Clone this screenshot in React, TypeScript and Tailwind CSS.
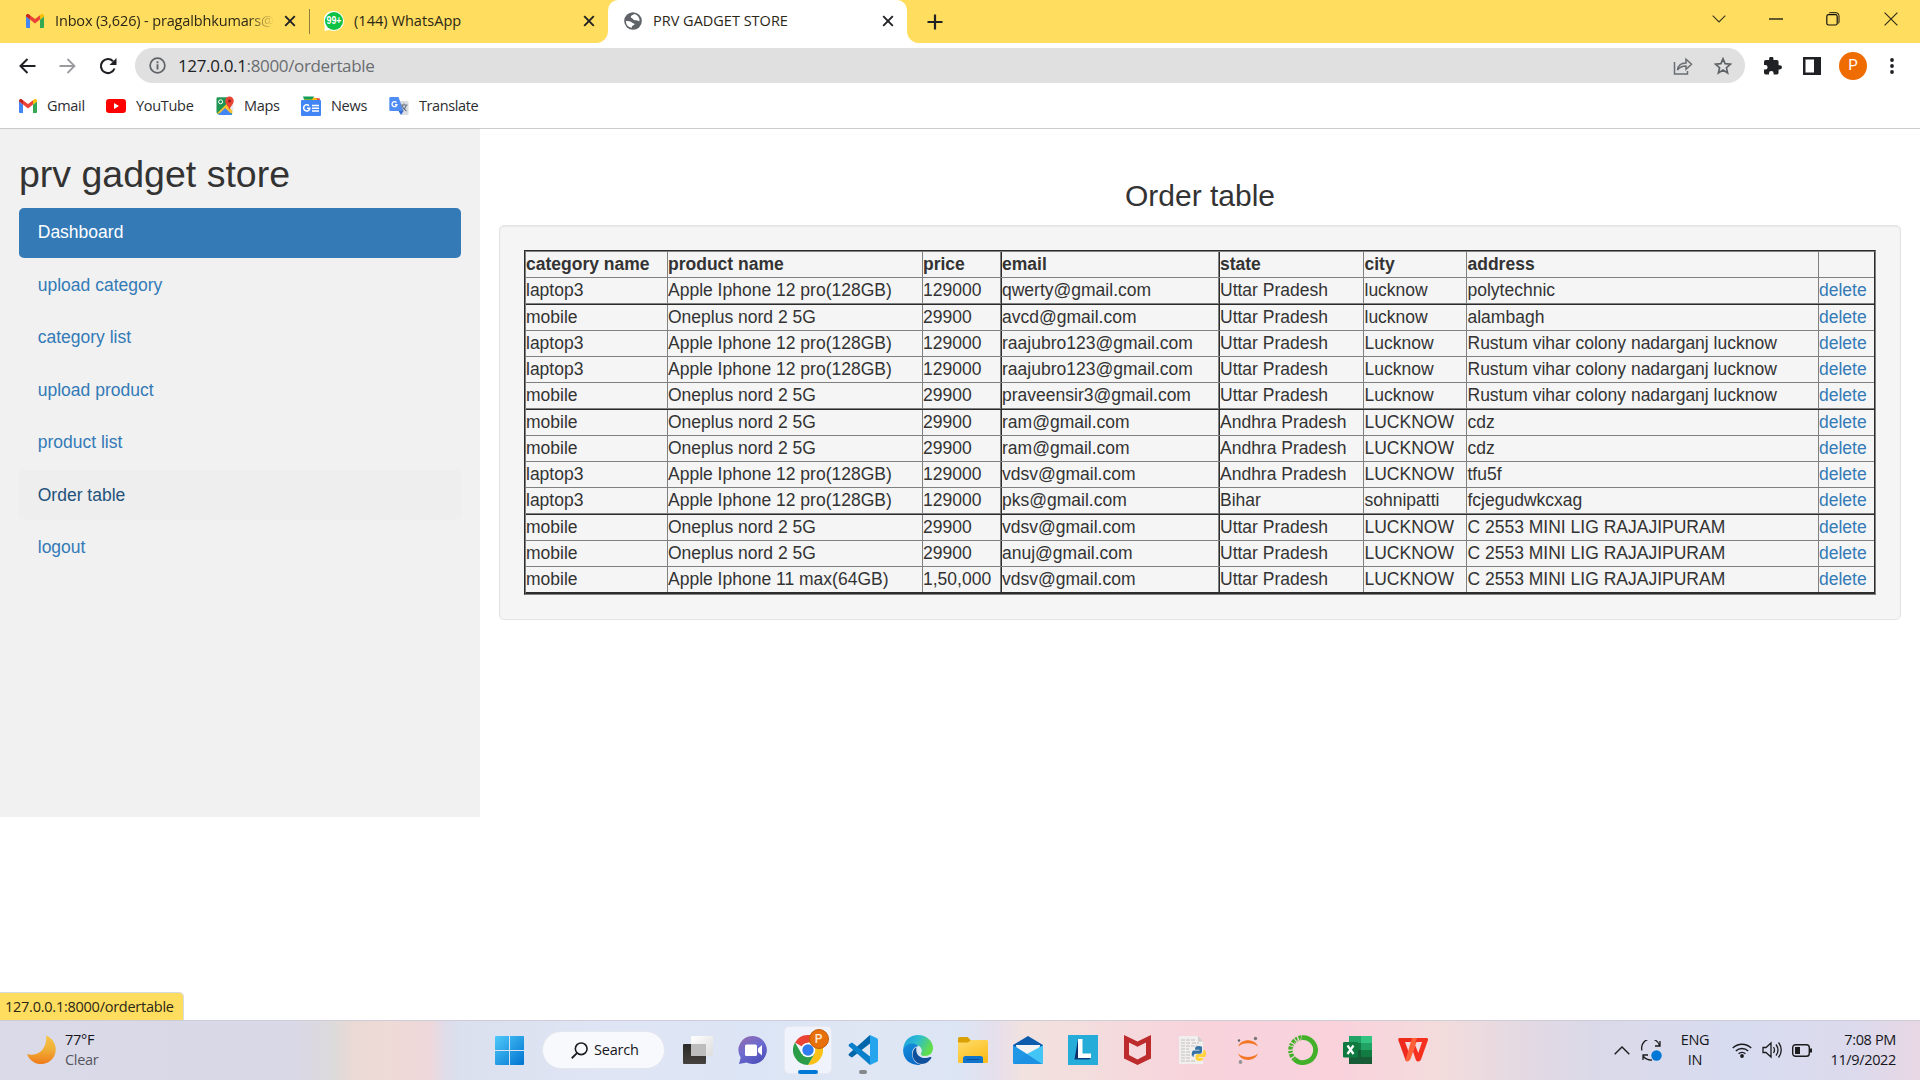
import React from "react";

const UI = "font-['Open_Sans','Noto_Sans',sans-serif]";

/* ---------- brand icons ---------- */

const Gmail = ({ className = "" }: { className?: string }) => (
  <svg viewBox="0 0 18 14" className={className}>
    <path d="M0 1.800V13a1 1 0 0 0 1 1h3V5.500L0 2.400z" fill="#4285f4" />
    <path d="M14 5.500V14h3a1 1 0 0 0 1-1V2.400z" fill="#34a853" />
    <path d="M14 1.200v4.400l4-3V1.700C18 .2 16.200-.5 15 .4z" fill="#fbbc04" />
    <path d="M4 1.200 9 5l5-3.800v4.400L9 9.400 4 5.600z" fill="#ea4335" />
    <path d="M0 1.700v.9l4 3V1.200L3 .4C1.800-.5 0 .2 0 1.700z" fill="#c5221f" />
  </svg>
);

const YouTube = () => (
  <svg viewBox="0 0 20 14" className="h-[14px] w-5">
    <rect width="20" height="14" rx="3.200" fill="#f00" />
    <path d="M8 4v6l5-3z" fill="#fff" />
  </svg>
);

const Maps = () => (
  <svg viewBox="0 0 20 20" className="h-5 w-5">
    <path d="M2 1.500h10l5 8V18H2z" fill="#34a853" />
    <path d="M1.500 2v15L13 7l1-5.500H3Q1.500 1.500 1.500 2z" fill="#1e9553" />
    <path d="m2 17.500 11-11L17.500 12v5z" fill="#fbc02d" />
    <path d="m3 19 7-7 7.500 7z" fill="#4285f4" />
    <path d="m12 8 6.500 8.500V9z" fill="#e8eaed" />
    <circle cx="5.600" cy="5.800" r="2" fill="none" stroke="#fff" strokeWidth="1" />
    <path d="M14.500 .5A4.200 4.200 0 0 0 10.300 4.800C10.300 8.500 13.500 10 14.500 14c1-4 4.200-5.500 4.200-9.200A4.200 4.200 0 0 0 14.500 .5z" fill="#ea4335" />
    <circle cx="14.500" cy="5" r="1.500" fill="#8c1d18" />
  </svg>
);

const News = () => (
  <svg viewBox="0 0 20 20" className="h-5 w-5">
    <path d="m8 1 11 1.500-1 5H6z" fill="#ea4335" />
    <path d="M4 2h11.500l1 4H3z" fill="#fbbc04" />
    <path d="M2 .5h11l-2 3H3z" fill="#0f9d58" />
    <rect y="4" width="20" height="16" rx="1" fill="#4285f4" />
    <path d="M8 9.800A3.100 3.100 0 1 0 8.800 12.300H6" fill="none" stroke="#fff" strokeWidth="1.600" />
    <path d="M11 9.500h7M11 12.200h7M11 15h7" stroke="#fff" strokeWidth="1.500" />
  </svg>
);

const Translate = () => (
  <svg viewBox="0 0 20 20" className="h-5 w-5">
    <path d="M8 5h10a1.500 1.500 0 0 1 1.500 1.500v11A1.500 1.500 0 0 1 18 19h-5.500z" fill="#d9dce1" />
    <path d="M1.500 1h8l5 14h-13A1.200 1.200 0 0 1 .3 13.800V2.200A1.200 1.200 0 0 1 1.500 1z" fill="#4f8df5" />
    <path d="M9.500 15h5l-2.500 4z" fill="#3367d6" />
    <path d="M7.500 6.600A2.500 2.500 0 1 0 8 8.600H6" fill="none" stroke="#fff" strokeWidth="1.300" />
    <path d="M11.500 9h7M15 7.500V9M13 9.500c.8 2.500 2 4 4.500 5.500M17.200 9.500c-.7 2.500-2 4-4.200 5.500" fill="none" stroke="#6b7785" strokeWidth="1.100" />
  </svg>
);

const WhatsApp = () => (
  <svg viewBox="0 0 20 20" className="h-5 w-5">
    <path d="M10 0a10 10 0 0 1 0 20 10 10 0 0 1-4.500-1L.5 20l.3-5A10 10 0 0 1 10 0z" fill="#fff" />
    <circle cx="10" cy="10" r="9" fill="#0cc143" />
    <text x="10" y="13.400" fontSize="10" fontWeight="700" textAnchor="middle" fill="#fff" fontFamily="Liberation Sans" textLength="15" lengthAdjust="spacingAndGlyphs">99+</text>
  </svg>
);

const Globe = () => (
  <svg viewBox="0 0 18 18" className="h-[18px] w-[18px]">
    <circle cx="9" cy="9" r="8.800" fill="#5f6368" />
    <path d="M10.500 2c-2 1-3.500 1.200-3.800 3 .2 1.500 1.800.8 2.300 2 .2 1.300 2 1 3.200 1.300 1.500.2 2.300.5 3.300 1.200a7 7 0 0 0-5-7.500zM1.900 9c2 .2 4.500-.2 5.600 1.300.8 1 2.500.8 3 1.700.3 1.500-2 1.300-2.500 2.300-.2.800 0 1.200-.5 1.500A7 7 0 0 1 1.900 9z" fill="#fff" />
  </svg>
);

const TabClose = () => (
  <svg viewBox="0 0 12 12" className="h-3 w-3">
    <path d="m1.200 1.200 9.600 9.600m0-9.600-9.600 9.600" stroke="#202124" strokeWidth="1.900" />
  </svg>
);

/* ---------- browser chrome ---------- */

const TabStrip = () => (
  <div className={`flex h-[43px] bg-[#ffdd5e] text-[14.500px] text-[#2b2717] ${UI}`}>
    <div className="flex h-[42px] w-[309px] items-center pl-[26px]">
      <Gmail className="h-[14px] w-[18px]" />
      <span className="ml-[11px] w-[219px] overflow-hidden whitespace-nowrap tracking-[-0.150px] [mask-image:linear-gradient(90deg,#000_88%,transparent)]">
        Inbox (3,626) - pragalbhkumars@
      </span>
      <span className="ml-[10px]"><TabClose /></span>
    </div>
    <div className="mt-[9px] h-[25px] w-px bg-[#8f7e3c]" />
    <div className="w-[298px] bg-white">
      <div className="flex h-[43px] items-center rounded-br-[12px] bg-[#ffdd5e] pb-px pl-[14px]">
        <WhatsApp />
        <span className="ml-[10px] w-[229px] tracking-[0.050px]">(144) WhatsApp</span>
        <TabClose />
      </div>
    </div>
    <div className="bg-[#ffdd5e]">
      <div className="flex h-[43px] w-[299px] items-center rounded-t-[10px] bg-white pb-px pl-[16px]">
        <Globe />
        <span className="ml-[11px] w-[229px] tracking-[0px]">PRV GADGET STORE</span>
        <TabClose />
      </div>
    </div>
    <div className="flex flex-1 bg-white">
      <div className="flex flex-1 items-center rounded-bl-[12px] bg-[#ffdd5e] pl-[20px]">
        <svg viewBox="0 0 16 16" className="h-4 w-4">
          <path d="M8 .5v15M.5 8h15" stroke="#202124" strokeWidth="2.200" />
        </svg>
        <div className="mb-[6px] ml-auto flex items-center pr-[22px]">
          <svg viewBox="0 0 14 8" className="mr-[43px] h-2 w-[14px]"><path d="m.7.7 6.300 6.300L13.300.7" fill="none" stroke="#3a3420" strokeWidth="1.100" /></svg>
          <svg viewBox="0 0 14 2" className="mr-[43px] h-[2px] w-[14px]"><path d="M0 1h14" stroke="#111" strokeWidth="1.300" /></svg>
          <svg viewBox="0 0 14 14" className="mr-[44px] h-[14px] w-[14px]">
            <rect x=".8" y="2.600" width="10.400" height="10.400" rx="1.800" fill="none" stroke="#111" strokeWidth="1.200" />
            <path d="M3 1.200q.5-.5 1.300-.5h5.700a3 3 0 0 1 3 3V10q0 1-.6 1.500" fill="none" stroke="#111" strokeWidth="1" />
          </svg>
          <svg viewBox="0 0 14 14" className="h-[14px] w-[14px]"><path d="m.6.600 12.800 12.800m0-12.800L.6 13.400" stroke="#2a2618" strokeWidth="1.100" /></svg>
        </div>
      </div>
    </div>
  </div>
);

const Toolbar = () => (
  <div className={`flex h-[45px] items-center bg-white pl-[19px] ${UI}`}>
    <svg viewBox="0 0 17 16" className="h-4 w-[17px]"><path d="M16.500 8H2M8.500 1 1.500 8l7 7" fill="none" stroke="#202124" strokeWidth="2" /></svg>
    <svg viewBox="0 0 17 16" className="ml-[23px] h-4 w-[17px]"><path d="M.5 8H15M8.500 1l7 7-7 7" fill="none" stroke="#9a9ca0" strokeWidth="1.800" /></svg>
    <svg viewBox="0 0 18 18" className="ml-[23px] h-[18px] w-[18px]">
      <path d="M15.500 11.500A7 7 0 1 1 14 4.200" fill="none" stroke="#202124" strokeWidth="2.100" />
      <path d="M17.500 1v7h-7z" fill="#202124" />
    </svg>
    <div className="ml-[18px] flex h-[35px] w-[1610px] items-center rounded-full bg-[#e0e0e0] pl-[14px] pr-[13px]">
      <svg viewBox="0 0 18 18" className="h-[17px] w-[17px]">
        <circle cx="9" cy="9" r="7.800" fill="none" stroke="#5f6368" strokeWidth="1.800" />
        <path d="M9 7.800v5.400M9 4.600v2" stroke="#5f6368" strokeWidth="2" />
      </svg>
      <span className="ml-[12px] text-[17px] tracking-[-0.350px] text-[#202124]">
        127.0.0.1<span className="text-[#6a6d71]">:8000/ordertable</span>
      </span>
      <svg viewBox="0 0 20 18" className="ml-auto h-[18px] w-5">
        <path d="M1.500 5v12h13v-3M4.500 13c.5-4 3.500-7 8.500-7V2.200l5.500 5-5.500 5V9c-4 0-6.500 1.200-8.500 4z" fill="none" stroke="#6a6d71" strokeWidth="1.500" />
      </svg>
      <svg viewBox="0 0 18 18" className="ml-[21px] h-[18px] w-[18px]">
        <path d="m9 1.800 2.100 4.900 5.300.500-4 3.500 1.200 5.200L9 13.100l-4.600 2.800 1.200-5.200-4-3.500 5.300-.5z" fill="none" stroke="#5f6368" strokeWidth="1.700" />
      </svg>
    </div>
    <svg viewBox="2 1.500 21 21" className="ml-[19px] h-[18px] w-[18px]">
      <path d="M20.500 11H19V7a2 2 0 0 0-2-2h-4V3.500a2.500 2.500 0 0 0-5 0V5H4a2 2 0 0 0-2 2v3.800h1.500a2.700 2.700 0 0 1 0 5.400H2V20a2 2 0 0 0 2 2h3.800v-1.500a2.700 2.700 0 0 1 5.400 0V22H17a2 2 0 0 0 2-2v-4h1.500a2.500 2.500 0 0 0 0-5z" fill="#202124" />
    </svg>
    <svg viewBox="0 0 18 18" className="ml-[21px] h-[18px] w-[18px]">
      <path d="M0 0h18v18H0zM2.500 2.500v13h8.500v-13z" fillRule="evenodd" fill="#202124" />
    </svg>
    <div className="ml-[18px] flex h-7 w-7 items-center justify-center rounded-full bg-[#ef6c00] font-[Roboto,sans-serif] text-[15px] text-white">P</div>
    <svg viewBox="0 0 4 16" className="ml-[23px] h-4 w-1"><g fill="#202124"><circle cx="2" cy="2" r="1.900" /><circle cx="2" cy="8" r="1.900" /><circle cx="2" cy="14" r="1.900" /></g></svg>
  </div>
);

const Bookmarks = () => (
  <div className={`flex h-[41px] items-center whitespace-nowrap border-b border-[#cbcbcb] bg-white pb-[5px] text-[14.500px] text-[#2c2d30] ${UI}`}>
    <div className="flex w-[106px] items-center pl-[19px]"><Gmail className="mr-[10px] h-[14px] w-[18px]" /><span className="tracking-[-0.300px]">Gmail</span></div>
    <div className="flex w-[109px] items-center"><YouTube /><span className="ml-[10px] tracking-[-0.300px]">YouTube</span></div>
    <div className="flex w-[86px] items-center"><Maps /><span className="ml-[9px] tracking-[-0.300px]">Maps</span></div>
    <div className="flex w-[88px] items-center"><News /><span className="ml-[10px] tracking-[-0.300px]">News</span></div>
    <div className="flex items-center"><Translate /><span className="ml-[10px] tracking-[-0.400px]">Translate</span></div>
  </div>
);

/* ---------- page ---------- */

const links = ["upload category", "category list", "upload product", "product list", "Order table", "logout"];

const Sidebar = () => (
  <div className="h-[688px] w-[480px] bg-[#f1f1f1] px-[19px] pt-[25px]">
    <h2 className="mb-[12.500px] text-[37.500px] leading-[41.250px] text-[#333]">prv gadget store</h2>
    <div className="flex flex-col gap-[2.500px] text-[17.500px] leading-[25px]">
      <a className="h-[50px] rounded-[5px] bg-[#337ab7] px-[18.750px] py-[12.500px] text-white">Dashboard</a>
      {links.map((l) => (
        <a
          key={l}
          className={`h-[50px] rounded-[5px] px-[18.750px] py-[12.500px] ${l === "Order table" ? "bg-[#eee] text-[#23527c]" : "text-[#337ab7]"}`}
        >
          {l}
        </a>
      ))}
    </div>
  </div>
);

const header = ["category name", "product name", "price", "email", "state", "city", "address", ""];
const IP = "Apple Iphone 12 pro(128GB)";
const ON = "Oneplus nord 2 5G";
const UP = "Uttar Pradesh";
const AP = "Andhra Pradesh";
const RV = "Rustum vihar colony nadarganj lucknow";
const RJ = "C 2553 MINI LIG RAJAJIPURAM";
const orders = [
  ["laptop3", IP, "129000", "qwerty@gmail.com", UP, "lucknow", "polytechnic"],
  ["mobile", ON, "29900", "avcd@gmail.com", UP, "lucknow", "alambagh"],
  ["laptop3", IP, "129000", "raajubro123@gmail.com", UP, "Lucknow", RV],
  ["laptop3", IP, "129000", "raajubro123@gmail.com", UP, "Lucknow", RV],
  ["mobile", ON, "29900", "praveensir3@gmail.com", UP, "Lucknow", RV],
  ["mobile", ON, "29900", "ram@gmail.com", AP, "LUCKNOW", "cdz"],
  ["mobile", ON, "29900", "ram@gmail.com", AP, "LUCKNOW", "cdz"],
  ["laptop3", IP, "129000", "vdsv@gmail.com", AP, "LUCKNOW", "tfu5f"],
  ["laptop3", IP, "129000", "pks@gmail.com", "Bihar", "sohnipatti", "fcjegudwkcxag"],
  ["mobile", ON, "29900", "vdsv@gmail.com", UP, "LUCKNOW", RJ],
  ["mobile", ON, "29900", "anuj@gmail.com", UP, "LUCKNOW", RJ],
  ["mobile", "Apple Iphone 11 max(64GB)", "1,50,000", "vdsv@gmail.com", UP, "LUCKNOW", RJ],
];

const thin = "border-r border-[#808080]";
const thick = "border-r border-[#2c2c2c] shadow-[inset_-1px_0_#808080]";
const cellLine = [thin, thin, thick, thick, thin, thin, thin, ""];

const rowLine = (i: number) => {
  if (i === 12) return "h-[25px]";
  if (i === 1 || i === 5 || i === 9) return "h-[27px] border-b border-[#2c2c2c] shadow-[inset_0_-1px_#808080]";
  return "h-[26px] border-b border-[#808080]";
};

const OrderTable = () => (
  <div className="border border-b-[#808080] border-l-[#2c2c2c] border-r-[#808080] border-t-[#2c2c2c]">
    <div className="border border-b-2 border-b-[#2c2c2c] border-l-[#808080] border-r-[#2c2c2c] border-t-[#808080]">
      {[header, ...orders.map((o) => [...o, "delete"])].map((row, i) => (
        <div key={i} className={`grid grid-cols-[142px_255px_79px_218px_144px_103px_352px_55px] ${rowLine(i)}`}>
          {row.map((c, j) => (
            <div
              key={j}
              className={`whitespace-nowrap leading-[25px] ${j === 5 || j === 6 ? "pl-[0.500px]" : ""} ${cellLine[j]} ${i === 0 ? "font-bold" : ""} ${j === 7 ? "text-[#337ab7]" : "text-[#333]"}`}
            >
              {c}
            </div>
          ))}
        </div>
      ))}
    </div>
  </div>
);

const Page = () => (
  <div className="flex h-[891px] bg-white font-['Liberation_Sans',Arial,sans-serif] text-[17.500px]">
    <Sidebar />
    <div className="flex flex-1 flex-col px-[19px] pt-[50px]">
      <h3 className="mb-[13px] text-center text-[30px] leading-[33px] text-[#333]">Order table</h3>
      <div className="h-[395px] rounded-[5px] border border-[#e3e3e3] bg-[#f5f5f5] pl-[24px] pr-[24px] pt-[24px] shadow-[inset_0_1px_1px_rgba(0,0,0,0.05)]">
        <OrderTable />
      </div>
    </div>
  </div>
);

/* ---------- taskbar ---------- */

const Cell = ({ children }: { children: React.ReactNode }) => (
  <div className="flex h-[60px] w-[55px] items-center justify-center">{children}</div>
);

const Chrome = () => (
  <svg viewBox="0 0 30 30" className="h-[30px] w-[30px]">
    <path d="M15 15 2 7.500A15 15 0 0 1 28 7.500H15z" fill="#ea4335" />
    <path d="M28 7.500A15 15 0 0 1 15 30l6.500-11.200L15 7.500z" fill="#fbc116" />
    <path d="M15 30A15 15 0 0 1 2 7.500l6.500 11.200L21.500 18.800z" fill="#2b9d48" />
    <circle cx="15" cy="15" r="7.300" fill="#fff" />
    <circle cx="15" cy="15" r="5.700" fill="#2f7cf0" />
  </svg>
);

const AppIcons = () => (
  <>
    <Cell>
      <svg viewBox="0 0 30 28" className="h-7 w-[30px]">
        <defs>
          <linearGradient id="tv1" x2="0" y2="1"><stop stopColor="#2b2a28" /><stop offset="1" stopColor="#45423f" /></linearGradient>
          <linearGradient id="tv2" x2="1" y2="1"><stop stopColor="#fff" /><stop offset="1" stopColor="#dcdcdc" /></linearGradient>
        </defs>
        <rect y="8" width="23" height="20" rx="1" fill="url(#tv1)" />
        <rect x="8" width="22" height="20" rx="1" fill="url(#tv2)" />
        <path d="M8 8h15v12H8z" fill="#bdbdbd" />
      </svg>
    </Cell>
    <Cell>
      <svg viewBox="0 0 30 30" className="h-[30px] w-[30px]">
        <defs><linearGradient id="ch" x1=".2" y1="0" x2=".8" y2="1"><stop stopColor="#8f6bb0" /><stop offset=".45" stopColor="#6d6bd0" /><stop offset="1" stopColor="#4a4cb8" /></linearGradient></defs>
        <path d="M15 1a14 14 0 1 1-6.500 26.500L1 29l1.700-6.500A14 14 0 0 1 15 1z" fill="url(#ch)" />
        <rect x="7" y="9.500" width="12" height="11.500" rx="1.500" fill="#fff" />
        <path d="m20 13.500 4-3.500v10.500l-4-3.500z" fill="#fff" />
      </svg>
    </Cell>
    <Cell>
      <div className="relative flex h-12 w-12 items-center justify-center rounded-[5px] border border-[#e6e9f2] bg-[#f0f3fb]">
        <Chrome />
        <div className="absolute right-[2px] top-[2px] flex h-5 w-5 items-center justify-center rounded-full border border-[#c25a06] bg-[#e8700a] font-[Roboto,sans-serif] text-[12px] font-medium text-[#ffe9d6]">P</div>
        <div className="absolute -bottom-px left-[13px] h-1 w-5 rounded-full bg-[#0078d4]" />
      </div>
    </Cell>
    <Cell>
      <div className="relative">
        <svg viewBox="0 0 30 30" className="h-[30px] w-[30px]">
          <path d="M22 0v8.500L4 22.500 1 20.800q-1-1 0-2z" fill="#0065a9" />
          <path d="M22 30v-8.500L4 7.500 1 9.200q-1 1 0 2z" fill="#0a7fcb" />
          <path d="m22 0 7 3.200q1 .6 1 1.600v20.400q0 1-1 1.600L22 30z" fill="#24a5ee" />
        </svg>
        <div className="absolute -bottom-[9px] left-[11px] h-1 w-2 rounded-full bg-[#85878c]" />
      </div>
    </Cell>
    <Cell>
      <svg viewBox="0 0 30 30" className="h-[30px] w-[30px]">
        <defs>
          <linearGradient id="ed1" x2="1" y2=".4"><stop stopColor="#1a9de0" /><stop offset=".5" stopColor="#2dbcd0" /><stop offset="1" stopColor="#62dd4a" /></linearGradient>
          <linearGradient id="ed2" x2=".4" y2="1"><stop stopColor="#1590dc" /><stop offset="1" stopColor="#0a6cc8" /></linearGradient>
        </defs>
        <path d="M.2 14C1 5.500 7 0 15 0c8.500 0 15 6 15 13 0 5-3.500 8-8 8-3.500 0-4.500-1.500-4-2.600 1.500-2 2-8-7-9C6 9 1.500 11 .2 14z" fill="url(#ed1)" />
        <path d="M.2 14C2.500 8 11.500 6.500 15.500 11 10 12 8 17 9.500 22s5 7 8.500 7.700C8 31.500-.8 24.500.2 14z" fill="url(#ed2)" />
        <path d="M13.500 12.300C8 15 8 25 15.500 28.500c6 1.500 10.500-1.500 12.800-5.500.5-1-.3-1.400-1.300-.9-6 2.800-15.500-.1-13.500-9.800z" fill="#0f4f9c" />
      </svg>
    </Cell>
    <Cell>
      <svg viewBox="0 0 30 27" className="h-[27px] w-[30px]">
        <defs><linearGradient id="fo" x2=".6" y2="1"><stop stopColor="#ffdc6b" /><stop offset="1" stopColor="#fbbd1d" /></linearGradient></defs>
        <path d="M0 1.500Q0 0 1.500 0h8L13 3.500V10H0z" fill="#dba006" />
        <path d="M0 5.500h10L13 3h15.500Q30 3 30 4.500v20q0 1.500-1.500 1.500h-27Q0 26 0 24.500z" fill="url(#fo)" />
        <path d="M5 26v-4.500Q5 19 7.500 19h15q2.500 0 2.500 2.500V26z" fill="#0f75cc" />
        <path d="M9 22.500h12" stroke="#094f96" strokeWidth="1.200" strokeLinecap="round" />
      </svg>
    </Cell>
    <Cell>
      <svg viewBox="0 0 30 28" className="h-7 w-[30px]">
        <path d="M0 9 15 0l15 9v3H0z" fill="#0c5bad" />
        <path d="M3 9h24l-1 9H4z" fill="#f3f3f3" />
        <path d="M0 9.200 30 28H1q-1 0-1-1z" fill="#1f97e5" />
        <path d="M30 9.200v17.600q0 1.200-1 1.200L14 18z" fill="#43c6f5" />
        <path d="m14 18 15 10H1z" fill="#1d8fe0" opacity=".75" />
      </svg>
    </Cell>
    <Cell>
      <svg viewBox="0 0 30 30" className="h-[30px] w-[30px]">
        <path d="M0 0h30v30H0z" fill="#26acd9" />
        <path d="m10 4-3.500 20.500L10 23z" fill="#0b2e6b" />
        <path d="M6.500 24.500 10 22l13 1-2 1.500z" fill="#0c3f80" />
        <path d="M10 4h4.500v14.500H23V23H10z" fill="#fff" />
      </svg>
    </Cell>
    <Cell>
      <svg viewBox="0 0 27 30" className="h-[30px] w-[27px]">
        <path d="m0 0 13.500 6.500L27 0v23.500L13.500 30 0 23.500zM5 7.500V20l8.500 4.500L22 20V7.500l-8.500 4.300z" fillRule="evenodd" fill="#bd2b2d" />
      </svg>
    </Cell>
    <Cell>
      <svg viewBox="0 0 28 28" className="h-7 w-7">
        <path d="M0 0h19l5 5.500V28H0z" fill="#f1efee" />
        <path d="M19 0v5.500h5z" fill="#cfcccb" />
        <path d="M2 4h15M2 7h9m2 0h7M2 10h17M2 13h8M2 16h9M2 19h11M2 22h10M2 25h14" stroke="#c4bfbf" strokeWidth="1" strokeDasharray="4 1" />
        <path d="M17 10.500q3.500-1.200 6 .2v5q0 2-2 2h-4q-2.500 0-2.500 3.300H14q-2.500-3.500 0-6.500h6.500v-.8H16q0-2.500 1-3.200z" fill="#3572a5" />
        <path d="M24.500 14H26q2.300 4 0 7h-6.500v.8H24q.5 3-3.500 3.200-4 0-4-3v-1.500q0-2.500 2.500-2.500h3.500q2-.5 2-4z" fill="#ffd23e" />
      </svg>
    </Cell>
    <Cell>
      <svg viewBox="0 0 22 28" className="h-7 w-[22px]">
        <path d="M1 10.500C4 2 18 2 21 10.500 16 6 6 6 1 10.500zM1 17.500C4 26 18 26 21 17.500 16 22 6 22 1 17.500z" fill="#f37726" />
        <circle cx="18.500" cy="2.500" r="1.700" fill="#75757a" /><circle cx="2" cy="4.500" r="1.200" fill="#606064" /><circle cx="3.500" cy="26" r="1.900" fill="#96969a" />
      </svg>
    </Cell>
    <Cell>
      <svg viewBox="0 0 30 30" className="h-[30px] w-[30px]">
        <path d="M14 2.600a12.500 12.500 0 1 1-7.500 21.600" fill="none" stroke="#43b02a" strokeWidth="4.800" />
        <path d="M6.500 24.200A12.500 12.500 0 0 1 14 2.600" fill="none" stroke="#43b02a" strokeWidth="4.600" strokeDasharray="2 1.300 3 1" />
        <path d="M7 21.500A10.500 10.500 0 0 1 13 4" fill="none" stroke="#f9d3dc" strokeWidth="1" strokeDasharray="1.500 2" />
      </svg>
    </Cell>
    <Cell>
      <svg viewBox="0 0 29 28" className="h-7 w-[29px]">
        <path d="M6 0h23v28H6z" fill="#21a366" />
        <path d="M18 0h11v7H18z" fill="#33c481" /><path d="M18 7h11v7H18z" fill="#21a366" /><path d="M6 7h12v7H6z" fill="#107c41" />
        <path d="M18 14h11v7H18z" fill="#107c41" /><path d="M6 14h12v14H6zM18 21h11v7H18z" fill="#185c37" />
        <rect y="6" width="15" height="15.500" rx="1.200" fill="#0f7a40" />
        <path d="m4.500 9.500 6 8.500m0-8.500-6 8.500" stroke="#fff" strokeWidth="2.200" />
      </svg>
    </Cell>
    <Cell>
      <svg viewBox="0 0 30 24" className="h-6 w-[30px]">
        <path d="M1.500 0H17l-2.500 4H7l3.500 9.500-1 8q-.6 2-2 .5L.2 2Q0 0 1.500 0z" fill="#ee2a1c" />
        <path d="M14 0h6l-7.500 21q-1.200 2.500-3.500 2.500-1.500 0-1.500-1.500z" fill="#ff6038" />
        <path d="M19 0h9.500Q30.300 0 30 2l-7 19.500q-1 2.500-3.500 2Q18 23 17.500 21L15 13.500l2.300-6 3 7.500L24 4h-6.500z" fill="#f5301f" />
      </svg>
    </Cell>
  </>
);

const Taskbar = () => (
  <div className={`flex h-[60px] items-center border-t border-[#cdccd8] pb-px bg-[linear-gradient(90deg,#dbdae9_0px,#d9d8e7_200px,#d9d8e6_295px,#dddada_335px,#ead9d5_352px,#eedad6_390px,#edd7da_430px,#dfdcea_446px,#dae0ee_462px,#dfe5f4_600px,#dce5f5_760px,#dfe6f4_870px,#dce5f4_960px,#e6dfec_995px,#f2e2df_1025px,#f4dbdd_1110px,#f8d3dc_1200px,#f9d2dc_1340px,#f3dcdc_1440px,#e2d9e3_1530px,#dad9e9_1600px,#d8dcf0_1740px,#dcdaec_1860px,#e8d7e4_1920px)] text-[14.500px] text-[#16161a] ${UI}`}>
    <svg viewBox="0 0 29 30" className="ml-[27px] h-[30px] w-[29px]">
      <defs><linearGradient id="mo" x2="0" y2="1"><stop stopColor="#f7c548" /><stop offset=".5" stopColor="#f0ae35" /><stop offset="1" stopColor="#ee7a1b" /></linearGradient></defs>
      <path d="M19 .5C28 4 31 14 27 21.500 21 32 5 32 0 19c9 3 21-4 19-18.500z" fill="url(#mo)" />
    </svg>
    <div className="ml-[9px] w-[428px] leading-5 tracking-[-0.300px]">
      <div>77°F</div>
      <div className="text-[#55555e]">Clear</div>
    </div>
    <svg viewBox="0 0 29 29" className="ml-[2px] h-[29px] w-[29px]">
      <defs><linearGradient id="wi" x2="1" y2="1"><stop stopColor="#4fc9fa" /><stop offset="1" stopColor="#0072d0" /></linearGradient></defs>
      <path d="M1 0h13v14H0V1q0-1 1-1zM15 0h13q1 0 1 1v13H15zM0 15h14v14H1q-1 0-1-1zM15 15h14v13q0 1-1 1H15z" fill="url(#wi)" />
    </svg>
    <div className="ml-[18px] mr-[5px] flex h-[38px] w-[123px] items-center rounded-full border border-[#e4e7f0] bg-[#f8f9fd] pl-[28px]">
      <svg viewBox="0 0 18 18" className="h-[17px] w-[17px]"><circle cx="10.800" cy="7.200" r="6.200" fill="none" stroke="#1b1b1d" strokeWidth="1.700" /><path d="m6.300 11.700-5.500 5.500" stroke="#1b1b1d" strokeWidth="1.900" /></svg>
      <span className="ml-[6px] tracking-[-0.200px]">Search</span>
    </div>
    <AppIcons />
    <div className="ml-auto flex items-center pr-[24px]">
      <svg viewBox="0 0 16 9" className="h-[9px] w-4"><path d="m.7 8.300 7.300-7.300 7.300 7.300" fill="none" stroke="#1b1b1d" strokeWidth="1.400" /></svg>
      <svg viewBox="0 0 21 21" className="ml-[11px] h-[21px] w-[21px]">
        <path d="M1 10.500A9 9 0 0 1 18.500 5.500M19 1v5h-5M2 20v-5h5M2.500 16.500Q6 20.500 11 20" fill="none" stroke="#1b1b1d" strokeWidth="1.300" />
        <circle cx="15.500" cy="15.500" r="5.200" fill="#0078d7" />
      </svg>
      <div className="ml-[13px] w-[40px] text-center leading-5 tracking-[-0.300px]"><div>ENG</div><div>IN</div></div>
      <svg viewBox="0 0 20 16" className="ml-[17px] h-4 w-5">
        <path d="M.8 6a13 13 0 0 1 18.400 0M3.800 9a8.800 8.800 0 0 1 12.400 0M6.600 11.800a4.800 4.800 0 0 1 6.800 0" fill="none" stroke="#1b1b1d" strokeWidth="1.400" />
        <circle cx="10" cy="14" r="1.900" fill="#1b1b1d" />
      </svg>
      <svg viewBox="0 0 20 18" className="ml-[10px] h-[18px] w-5">
        <path d="M1 6.500h3L9 2v14l-5-4.500H1zM11.500 6q2 3 0 6M14 3.500q4 5.500 0 11M16.500 1.500q5.500 7.500 0 15" fill="none" stroke="#1b1b1d" strokeWidth="1.300" />
      </svg>
      <svg viewBox="0 0 20 13" className="ml-[10px] h-[13px] w-5">
        <rect x=".7" y=".7" width="16.600" height="11.600" rx="2.800" fill="none" stroke="#1b1b1d" strokeWidth="1.400" />
        <path d="M3 3h5v7H3zM18 4.500h2v4h-2z" fill="#1b1b1d" />
      </svg>
      <div className="w-[84px] text-right leading-5 tracking-[-0.350px]"><div>7:08 PM</div><div>11/9/2022</div></div>
    </div>
  </div>
);

export default function App() {
  return (
    <div className="h-[1080px] w-[1920px] overflow-hidden bg-white">
      <TabStrip />
      <Toolbar />
      <Bookmarks />
      <div className="relative">
        <Page />
        <div className={`absolute bottom-0 left-0 flex h-[28px] w-[184px] items-center whitespace-nowrap rounded-tr-[5px] border-r border-t border-[#d9d9e0] bg-[#ffdd5e] pl-[5px] text-[14.500px] tracking-[-0.250px] text-[#2b2717] ${UI}`}>
          127.0.0.1:8000/ordertable
        </div>
      </div>
      <Taskbar />
    </div>
  );
}
